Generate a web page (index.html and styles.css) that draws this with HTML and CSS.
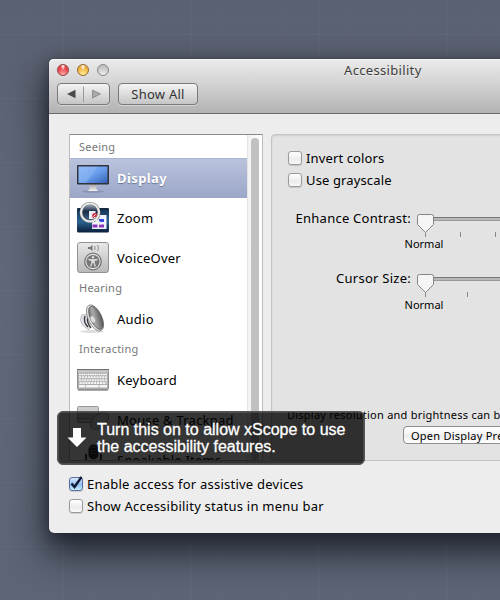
FILE: index.html
```
<!DOCTYPE html>
<html lang="en">
<head>
<meta charset="utf-8">
<title>Accessibility</title>
<link rel="stylesheet" href="styles.css">
</head>
<body>
<main class="desktop">
<section class="window">
  <header class="titlebar">
    <div class="title-row">
      <div class="lights"><i class="light red"></i><i class="light amber"></i><i class="light gray"></i></div>
      <h1 class="title">Accessibility</h1>
    </div>
    <div class="toolbar">
      <div class="nav">
        <svg width="51" height="20" viewBox="0 0 51 20"><path d="M9 10 17.500 5.800v8.400z" fill="#4b4b4b"/><path d="M25.500 2.500v15.500" stroke="#999"/><path d="M42.500 10 34.500 6v8z" fill="#aaa" stroke="#858585" stroke-width=".8"/></svg>
      </div>
      <button class="show-all">Show All</button>
    </div>
  </header>
  <div class="panes">
    <div class="list">
      <div class="items">
        <div class="group first"><span>Seeing</span></div>
        <div class="item selected">
          <svg class="icon" viewBox="0 0 32 32"><defs><linearGradient id="scr" x2="1" y2="1"><stop stop-color="#7fb2f8"/><stop offset=".5" stop-color="#6ba0ee"/><stop offset="1" stop-color="#3562b6"/></linearGradient><linearGradient id="met" x2="0" y2="1"><stop stop-color="#8b8b8b"/><stop offset="1" stop-color="#f2f2f2"/></linearGradient></defs><ellipse cx="16" cy="29.500" rx="11" ry="1.500" fill="#77809c" opacity=".5"/><path d="M12.500 20h7v7.500l2 1.500h-11l2-1.500z" fill="url(#met)"/><rect y="3" width="32" height="19.500" rx="1" fill="#30333b"/><rect x="1.500" y="4.500" width="29" height="16.500" fill="url(#scr)"/><path d="M1.500 4.500H21L9 21H1.500z" fill="#fff" opacity=".12"/></svg>
          <span>Display</span></div>
        <div class="item">
          <svg class="icon" viewBox="0 0 32 32"><defs><linearGradient id="desk" x2="0" y2="1"><stop stop-color="#102d4d"/><stop offset=".55" stop-color="#2c6392"/><stop offset="1" stop-color="#0a1f3a"/></linearGradient><linearGradient id="lens" x2="0" y2="1"><stop stop-color="#a6b1c0"/><stop offset=".4" stop-color="#192a46"/><stop offset="1" stop-color="#426e98"/></linearGradient></defs><rect y="6" width="32" height="24.500" rx="1.500" fill="url(#desk)"/><path d="M0 7h32" stroke="#18212d"/><path d="M15 13h14.500v14H15z" fill="#f2f3fa"/><path d="M22 17h5v3h-5z" fill="#3547e0"/><path d="M15.500 22.500h5v3h-5zm6.500 0h5v3h-5z" fill="#8b36b8"/><circle cx="13" cy="11" r="8.500" fill="url(#lens)"/><path d="M12 9h6.500v8h-6.500z" fill="#e9edf5"/><circle cx="18" cy="13.700" r="2.800" fill="#d62a3a"/><path d="m16.500 14.500 2-2M17 15.500h2" stroke="#fff"/><circle cx="13" cy="10.500" r="9" fill="none" stroke="#777" stroke-width="3"/><circle cx="13" cy="10.500" r="9" fill="none" stroke="#ededed" stroke-width="2"/><path d="m19 18 5 4" stroke="#eee" stroke-width="2.500"/></svg>
          <span>Zoom</span></div>
        <div class="item">
          <svg class="icon" viewBox="0 0 32 32"><defs><linearGradient id="vo" x2="0" y2="1"><stop stop-color="#e8e8e8"/><stop offset="1" stop-color="#b9b9b9"/></linearGradient></defs><rect x=".5" y=".5" width="31" height="30" rx="2.500" fill="url(#vo)" stroke="#929292"/><path d="M11 5h2l2.500-2v6L13 7h-2z" fill="#777"/><path d="M17.500 4q1.500 2 0 4m3-5q2.200 3 0 6" fill="none" stroke="#888" stroke-width=".9"/><circle cx="16" cy="19.500" r="8.300" fill="#e4e4e4" stroke="#777" stroke-width="1.300"/><circle cx="16" cy="19.500" r="6.600" fill="#777"/><circle cx="16" cy="15.200" r="1.200" fill="#ddd"/><path d="M11.500 17.500q4.500 1 9 0M16 17.500V21M14.900 18v3l-1.200 3.500M17.100 18v3l1.200 3.500" fill="none" stroke="#ddd" stroke-width="1.300"/></svg>
          <span>VoiceOver</span></div>
        <div class="group"><span>Hearing</span></div>
        <div class="item">
          <svg class="icon" viewBox="0 0 32 32"><defs><linearGradient id="cone" x2="1" y2=".5"><stop stop-color="#555"/><stop offset=".45" stop-color="#aaa"/><stop offset="1" stop-color="#606060"/></linearGradient></defs><ellipse cx="15" cy="28.500" rx="12" ry="1.500" fill="#ddd"/><path d="M4.500 12q-2.500 6 1 10l6 5 4-12-5-4z" fill="#dfdfea" stroke="#aaa" stroke-width=".6"/><path d="M8 13q-2 6 3 11M11 13q-2 6 3 12" fill="none" stroke="#333" stroke-width="1.300"/><ellipse cx="18" cy="15" rx="6.800" ry="14.200" transform="rotate(-25 18 15)" fill="#e6e6e6" stroke="#858585" stroke-width=".8"/><ellipse cx="18.900" cy="14.800" rx="5.500" ry="12.600" transform="rotate(-25 18.900 14.800)" fill="url(#cone)" stroke="#555" stroke-width=".7"/><ellipse cx="15.800" cy="16.300" rx="2" ry="3.500" transform="rotate(-25 15.800 16.300)" fill="#ddd"/></svg>
          <span>Audio</span></div>
        <div class="group"><span>Interacting</span></div>
        <div class="item">
          <svg class="icon" viewBox="0 0 32 32"><path d="M1 26h30" stroke="#aaa" stroke-width="2"/><rect x=".5" y="5.500" width="31" height="20" rx="1" fill="#adadad" stroke="#909090"/><path d="M0 5.500h32" stroke="#727272"/><path d="M1 7.500h30" stroke="#c9c9c9" stroke-width="2"/><path d="M2 10.500h28" stroke="#fff" stroke-width="1.400" stroke-dasharray="1.700 .5"/><path d="M2 13.300h28M2.500 19h27" stroke="#f3f3f3" stroke-width="2" stroke-dasharray="2.200 .7"/><path d="M2 16.200h28" stroke="#f3f3f3" stroke-width="2" stroke-dasharray="1.900 .7"/><path d="M2 22.300h6m.7 0h13m.8 0h7.500" stroke="#f6f6f6" stroke-width="2.500"/></svg>
          <span>Keyboard</span></div>
        <div class="item">
          <svg class="icon" viewBox="0 0 32 32"><rect x=".5" y="2.500" width="21" height="16" rx="1" fill="#ccc" stroke="#999"/><path d="M1 14.500h20" stroke="#aaa"/><ellipse cx="22.500" cy="17" rx="10.500" ry="6.500" transform="rotate(-40 22.500 17)" fill="#ddd" stroke="#999"/></svg>
          <span>Mouse &amp; Trackpad</span></div>
        <div class="item">
          <svg class="icon" viewBox="0 0 32 32"><rect x="11.500" y=".5" width="10" height="15" rx="5" fill="#333"/><path d="M13.500 3.500h6m-6 3h6m-6 3h6" stroke="#999" stroke-dasharray="1 1"/><path d="M9 10v4q0 5 7.500 5t7.500-5v-4M16.500 19v9" fill="none" stroke="#444" stroke-width="2"/></svg>
          <span>Speakable Items</span></div>
      </div>
      <div class="track"><div class="bar"></div></div>
    </div>
    <div class="detail">
      <label class="check"><i class="box"></i><span class="snug">Invert colors</span></label>
      <label class="check"><i class="box"></i><span class="snug">Use grayscale</span></label>
      <div class="setting contrast">
        <span class="caption">Enhance Contrast:</span>
        <div class="slider"><svg width="100" height="26" viewBox="0 0 100 26"><path d="M9 4h91v4H9z" fill="#b9b9b9"/><path d="M9 4.500h91" stroke="#777"/><path d="M9 7.500h91" stroke="#999"/><path d="M9.500 18v6M44.500 19v5M79.500 19v5" stroke="#888"/><path class="knob" d="M3.500 1.500h12q2 0 2 2v8L9.500 19.500 1.500 11.500v-8q0-2 2-2z"/></svg><span class="normal">Normal</span></div>
      </div>
      <div class="setting">
        <span class="caption">Cursor Size:</span>
        <div class="slider"><svg width="100" height="26" viewBox="0 0 100 26"><path d="M9 4h91v4H9z" fill="#b9b9b9"/><path d="M9 4.500h91" stroke="#777"/><path d="M9 7.500h91" stroke="#999"/><path d="M9.500 18v6M51.500 19v5" stroke="#888"/><path class="knob" d="M3.500 1.500h12q2 0 2 2v8L9.500 19.500 1.500 11.500v-8q0-2 2-2z"/></svg><span class="normal low">Normal</span></div>
      </div>
      <div class="bottom">
        <p class="note">Display resolution and brightness can be set in Display preferences</p>
        <button class="open">Open Display Preferences…</button>
      </div>
    </div>
  </div>
  <footer class="footer">
    <label class="check"><i class="box on"><svg width="17" height="17" viewBox="0 0 17 17"><path d="M4.500 8.500 7.500 12 14.500 2" fill="none" stroke="#101a35" stroke-width="2.400"/></svg></i><span>Enable access for assistive devices</span></label>
    <label class="check"><i class="box"></i><span>Show Accessibility status in menu bar</span></label>
  </footer>
  <div class="tooltip">
    <svg width="20" height="20" viewBox="0 0 20 20"><path d="M6 0h8v9.500h5.500L10 19 .5 9.500H6z" fill="#fff"/></svg>
    <p>Turn this on to allow xScope to use<br>the accessibility features.</p>
  </div>
</section>
</main>
</body>
</html>
```
FILE: styles.css
```
* { box-sizing: border-box; }
body { margin: 0; font: 13px/16px "Noto Sans", "Open Sans", sans-serif; color: #000; letter-spacing: .24px; }
h1, p { margin: 0; font-weight: normal; }
span { white-space: nowrap; }
svg { display: block; flex: none; }
button { font: inherit; letter-spacing: inherit; color: inherit; padding: 0; white-space: nowrap; }
.desktop {
  width: 500px; height: 600px; overflow: hidden; padding: 59px 0 0 49px;
  background:
    linear-gradient(90deg, #ffffff0b 1px, transparent 1px) 62px 0 / 128px 100%,
    linear-gradient(90deg, #ffffff04 1px, transparent 1px) 30px 0 / 64px 100%,
    linear-gradient(#ffffff07 1px, transparent 1px) 0 34px / 100% 64px,
    linear-gradient(#5a6171, #606878 45%, #5c6475);
}
.window {
  position: relative; width: 720px; height: 474px; border-radius: 5px; background: #ededed;
  box-shadow: 0 0 1px #111, 0 16px 34px 4px #10141cc8, 0 3px 12px #10141c55;
}
.titlebar {
  height: 55px; border-radius: 5px 5px 0 0; border-bottom: 1px solid #6b6b6b;
  background: linear-gradient(#ebebeb, #d3d3d3 45%, #b2b2b2); box-shadow: inset 0 1px #f8f8f8; padding-top: 3px;
}
.title-row { display: flex; height: 16px; align-items: center; padding-left: 8px; }
.lights { display: flex; gap: 8px; }
.light { width: 12px; height: 12px; border-radius: 50%; border: 1px solid #8a8a8a; }
.red { border-color: #94413f; background: radial-gradient(ellipse at 50% 12%, #ffffffd0 0 8%, transparent 34%), radial-gradient(circle at 50% 95%, #ffb0aa, #e8434a 60%, #d84850); }
.amber { border-color: #98692b; background: radial-gradient(ellipse at 50% 12%, #ffffffd0 0 8%, transparent 34%), radial-gradient(circle at 50% 95%, #fff099, #f0b545 60%, #d9a040); }
.gray { background: radial-gradient(circle at 50% 95%, #eee, #c9c9c9 60%, #b4b4b4); }
.title { margin-left: 235px; font-size: 13px; line-height: 16px; letter-spacing: .33px; color: #3c3c3c; text-shadow: 0 1px #ffffff80; white-space: nowrap; }
.toolbar { display: flex; gap: 8px; padding: 5px 0 0 8px; }
.nav, .show-all { height: 22px; border: 1px solid #7a7a7a; border-radius: 4px; background: linear-gradient(#f4f4f4, #c5c5c5); box-shadow: 0 1px #ffffff66; }
.nav { width: 53px; }
.show-all { width: 80px; line-height: 19px; color: #333; }
.panes { display: flex; gap: 8px; padding: 20px 0 0 20px; }
.list { display: flex; flex: none; width: 194px; height: 327px; overflow: hidden; background: #fff; border: 1px solid #bbb; border-top-color: #8b8b8b; }
.items { width: 177px; flex: none; }
.group { height: 21px; padding: 2px 0 0 9px; font-size: 11px; color: #777; }
.group.first { height: 23px; padding-top: 4px; }
.item { display: flex; height: 40px; align-items: center; gap: 8px; padding-left: 7px; }
.selected { font-weight: bold; letter-spacing: .4px; color: #fff; background: linear-gradient(#bbc4dd, #9ba6c8); box-shadow: inset 0 1px #a9b4d2; text-shadow: 0 1px 1px #68749a; }
.icon { width: 32px; height: 32px; }
.track { width: 15px; flex: none; border-left: 1px solid #e4e4e4; background: linear-gradient(90deg, #f2f2f2, #fff); padding: 3px 0 0 3px; }
.bar { width: 8px; height: 322px; border-radius: 4px; background: #c1c1c1; }
.detail { width: 600px; height: 327px; flex: none; display: flex; flex-direction: column; border: 1px solid #c4c4c4; border-radius: 4px; background: #e3e3e3; box-shadow: inset 0 1px 2px #00000018; padding: 15px 0 0 16px; }
.check { display: flex; height: 22px; gap: 4px; align-items: flex-start; }
.snug { letter-spacing: .13px; }
.box { width: 14px; height: 14px; margin-top: 1px; flex: none; border: 1px solid #9a9a9a; border-radius: 3px; background: linear-gradient(#fff, #ececec 60%, #fafafa); box-shadow: 0 1px 1px #00000022; }
.box.on { border-color: #56709c; background: linear-gradient(#dceafc, #8fbdf0 55%, #c8edff); }
.box.on svg { margin: -3px 0 0 -3px; }
.setting { display: flex; height: 60px; gap: 5px; }
.contrast { margin-top: 16px; }
.caption { width: 123px; text-align: right; letter-spacing: .25px; }
.slider { width: 100px; padding-top: 3px; }
.slider svg { margin-bottom: -2px; }
.knob { fill: #f5f5f5; stroke: #858585; }
.normal { display: block; width: 40px; margin: 0 0 0 -12px; line-height: 14px; font-size: 11px; letter-spacing: 0; text-align: center; }
.low { padding-top: 1px; }
.note { font-size: 11px; line-height: 14px; white-space: nowrap; margin-left: -1px; }
.bottom { margin-top: 78px; }
.open { display: block; width: 190px; height: 18px; margin: 4px 0 0 115px; padding-left: 7px; text-align: left; font-size: 11px; line-height: 15px; border: 1px solid #8d8d8d; border-radius: 4px; background: linear-gradient(#fff, #f3f3f3 50%, #eaeaea 50%, #fff); }
.footer { padding: 15px 0 0 20px; }
.tooltip { position: absolute; left: 8px; top: 352px; width: 308px; height: 54px; display: flex; align-items: center; gap: 10px; padding-left: 9px; border: 1px solid #555; border-radius: 6px; background: #000000ca; box-shadow: inset 0 0 0 1px #ffffff20; color: #fff; }
.tooltip p { font: 16px/17px "Liberation Sans", sans-serif; letter-spacing: 0; -webkit-text-stroke: .3px #fff; }
```
